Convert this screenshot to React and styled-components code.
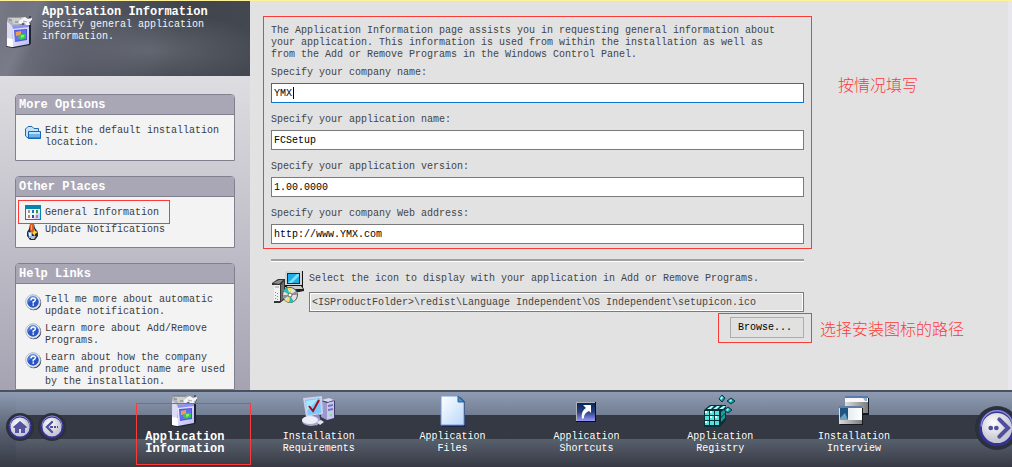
import React from "react";
import styled, { createGlobalStyle, css } from "styled-components";

const red = "#fb3a3a";

const GlobalStyle = createGlobalStyle`
  * { box-sizing: border-box; }
  html, body { margin: 0; padding: 0; }
  body, input, button {
    font-family: "Liberation Mono", "Noto Sans CJK SC", monospace;
    font-size: 10px;
    line-height: 12px;
  }
  svg { display: block; flex: none; }
`;

const Window = styled.div`
  height: 100vh;
  display: flex;
  flex-direction: column;
  overflow: hidden;
  border-top: 1px solid #fff09a;
  background: #e2e2e2;
`;

const Workspace = styled.div`
  flex: 1;
  min-height: 0;
  display: flex;
  border-right: 4px solid #e8e7ed;
`;

const Sidebar = styled.aside`
  width: 250px;
  flex: none;
  display: flex;
  flex-direction: column;
  overflow: hidden;
  background: #b4b3bf;
`;

const Banner = styled.header`
  flex: none;
  height: 75px;
  display: flex;
  gap: 6px;
  padding: 5px 6px 0 4px;
  color: #f4f4f6;
  background:
    linear-gradient(115deg, transparent 6%, rgba(150, 152, 165, 0.25) 14%, transparent 19%),
    radial-gradient(ellipse at 60% 65%, rgba(128, 131, 144, 0.5), transparent 55%),
    linear-gradient(100deg, #777a86 0%, #555863 35%, #40454c 70%, #444850 100%);

  svg { margin-top: 10px; }
`;

const PageTitle = styled.h1`
  margin: 0;
  font-size: 12px;
  line-height: 13px;
  color: #fff;
`;

const BannerText = styled.p`
  margin: 0;
`;

const Panels = styled.div`
  flex: 1;
  display: flex;
  flex-direction: column;
  gap: 15px;
  padding: 18px 15px 0;
  background: linear-gradient(#dedde1, #a5a3b2);
`;

const Panel = styled.section`
  border: 1px solid #80808f;
  border-radius: 4px 4px 0 0;
  background: #f3f3f3;
`;

const PanelTitle = styled.h2`
  margin: 0;
  height: 20px;
  padding: 0 3px;
  border-bottom: 1px solid #80808f;
  border-radius: 3px 3px 0 0;
  background: #a9a7b6;
  color: #fff;
  font-size: 12px;
  line-height: 20px;
`;

const LinkList = styled.ul`
  list-style: none;
  margin: 0;
  padding: ${(p) => p.$pad};
  display: flex;
  flex-direction: column;
  gap: ${(p) => p.$gap || 0}px;
`;

const PanelLink = styled.a`
  display: flex;
  align-items: ${(p) => (p.$framed ? "center" : "flex-start")};
  gap: 3px;
  margin-left: ${(p) => (p.$framed ? 6 : 9)}px;
  color: #3c3c3c;
  text-decoration: none;
`;

const Callout = styled.div`
  width: ${(p) => p.$width || "auto"};
  padding: ${(p) => p.$pad};
  margin: ${(p) => p.$margin || 0};
  border: 1px solid ${red};
`;

const Content = styled.main`
  flex: 1;
  min-width: 0;
  padding: 15px 8px 0 13px;
  color: #444;
`;

const Row = styled.div`
  display: grid;
  grid-template-columns: minmax(0, 549px) minmax(150px, 1fr);
  align-items: ${(p) => p.$align || "start"};
`;

const Note = styled.p`
  margin: 0;
  padding: ${(p) => p.$pad};
  color: ${red};
  font-family: "Noto Sans CJK SC", sans-serif;
  font-size: 16px;
  font-weight: 300;
  line-height: 20px;
  white-space: nowrap;
`;

const Intro = styled.p`
  margin: 0 0 6px;
  max-width: 516px;
`;

const Form = styled.form`
  display: flex;
  flex-direction: column;
  gap: 11px;
`;

const Field = styled.label`
  display: flex;
  flex-direction: column;
  gap: 4px;
`;

const TextInput = styled.input`
  width: 100%;
  height: 20px;
  margin: 0;
  padding: 0 2px;
  border: 1px solid #7a7a7a;
  border-radius: 0;
  outline: 0;
  color: #000;
  background: #fff;
  ${(p) => p.$active && css`
    border-color: #0f77d0;
    background: linear-gradient(#000, #000) 21px 3px / 1px 12px no-repeat #fff;
  `}
  ${(p) => p.$disabledLook && css`
    color: #444;
    background: #e2e2e2;
    box-shadow: inset 0 0 0 1px #fff;
  `}
`;

const Divider = styled.hr`
  height: 3px;
  margin: 10px 8px 9px;
  border: 0;
  border-top: 2px solid #a0a0a0;
  border-bottom: 1px solid #fff;
`;

const IconPicker = styled.div`
  display: flex;
  gap: 5px;
  padding: 0 8px 0 9px;

  label { flex: 1; gap: 7px; padding-top: 2px; }
`;

const BrowseButton = styled.button`
  display: block;
  width: 74px;
  height: 21px;
  padding: 0 4px 0 0;
  border: 1px solid #adadad;
  background: #e1e1e1;
  color: #000;
`;

const BrowseCell = styled.div`
  display: flex;
  justify-content: flex-end;
  padding-top: 1px;
`;

const Footer = styled.footer`
  flex: none;
  height: 77px;
  display: flex;
  overflow: hidden;
  border-top: 2px solid #4a525f;
  background:
    linear-gradient(#8e9bb2, #596272 50%, #363a44) 0 0 / 16px 100% no-repeat,
    linear-gradient(#8e9bb2 0, #737e92 23px, #343943 23px, #343943 47px, #58606d 47px, #373a44 75px);
`;

const HistoryButtons = styled.div`
  width: 118px;
  flex: none;
  display: flex;
  gap: 4px;
  padding: 21px 0 0 6px;
`;

const RoundButton = styled.button`
  display: block;
  width: ${(p) => p.$size}px;
  height: ${(p) => p.$size}px;
  flex: none;
  padding: 0;
  border: 0;
  background: none;
`;

const NextSlot = styled.div`
  width: 91px;
  flex: none;
  display: flex;
  padding: 14px 0 0 54px;
`;

const Steps = styled.nav`
  flex: 1;
  min-width: 0;
  display: flex;
`;

const Step = styled.a`
  position: relative;
  flex: 1;
  display: flex;
  flex-direction: column;
  align-items: center;
  gap: 4px;
  padding-top: 3px;
  color: #fff;
  text-align: center;
  text-decoration: none;

  ${(p) => p.$current && css`
    font-size: 12px;
    font-weight: bold;
    &::after {
      content: "";
      position: absolute;
      inset: 11px 1px 2px 18px;
      border: 1px solid ${red};
    }
  `}
`;

const ProductBox = () => (
  <svg width="32" height="32" viewBox="0 0 32 32">
    <defs>
      <linearGradient id="front" x2="1" y2="1">
        <stop stopColor="#f4f4ff" />
        <stop offset="1" stopColor="#b9bbf4" />
      </linearGradient>
    </defs>
    <path d="M25 9h2v18l-1 2-16 3-7-1-1-1 22-3Z" fill="#1f2230" />
    <path d="M3 5 8 9 9 31 3 30Z" fill="#dcdcf4" />
    <path d="M3 22 9 23v8l-6-1Z" fill="#fff" />
    <path d="m8 10 17-2v20L9 31Z" fill="url(#front)" />
    <path d="m4 1 17 0 4 6-17 3-5-5Z" fill="#b4b6b8" />
    <path d="M6 3h10M8 5h9M9 7h10" stroke="#e4e5e6" />
    <path d="M4 1h13M5 4h3M11 6h4" stroke="#77797c" />
    <path d="M8 10 25 8v3L9 13Z" fill="#8c93ee" />
    <path d="m10 14 13-1v11l-12 2Z" fill="#4e55dd" />
    <path d="m11 15 11-1v9l-11 2Z" fill="#656dec" />
    <path d="m12 16 5-1v4l-5 1Z" fill="#ee9e50" />
    <path d="m15 19 3-1 4 0v4l-5 2-3-2Z" fill="#34c851" />
    <path d="m17 19 3 0v2l-3 1Z" fill="#84f06a" />
    <path d="m17 3 4-2 3 2 4-1v3l-3 1 1 3-4 0-2-3-4 2-2-2Z" fill="#f5f5f8" />
    <path d="M25 1h2M27 5h1M18 8h2M26 8h1" stroke="#1b1c20" />
    <path d="m19 5 4 1" stroke="#a6a8ad" />
  </svg>
);

const FolderIcon = () => (
  <svg width="17" height="16" viewBox="0 0 17 16">
    <path d="M.5 4 3 1.5h4l2 2h4.5v3L13 13H3L.5 11Z" fill="#c4e3fa" stroke="#2268ae" />
    <path d="M3.5 6.5h12v7h-12Z" fill="#6bb3ea" stroke="#1765b4" />
    <path d="M4 7.5h11M4 8.5h11" stroke="#b9e2ff" />
    <path d="M4 12.5h11" stroke="#3b8ad0" />
  </svg>
);

const CalendarIcon = () => (
  <svg width="17" height="15" viewBox="0 0 17 15">
    <path d="M0 0h16v15H0Z" fill="#0784ad" />
    <path d="M1 4h14v10H1Z" fill="#f5f5fc" />
    <path d="M11 8h4v6H9Z" fill="#d5d1fa" />
    <path d="M3 5h2v3H3Z" fill="#9a9a9a" />
    <path d="M7 5h2v3H7Z" fill="#1a75b1" />
    <path d="M11 5h2v3h-2Z" fill="#23a03a" />
    <path d="M3 10h2v3H3Z" fill="#d17b51" />
    <path d="M7 10h2v3H7Z" fill="#2051a6" />
    <path d="M11 10h2v3h-2Z" fill="#bc8196" />
  </svg>
);

const UpdateIcon = () => (
  <svg width="17" height="16" viewBox="0 0 17 16">
    <path d="M5 0h4l1 4 3 4v4l-3 4H5l-3-4V8l2-3Z" fill="#202d46" />
    <path d="M5 0h4v4l1 3-3 2-2-2Z" fill="#d95a22" />
    <path d="M6 1h1v5H6Z" fill="#ffb17a" />
    <path d="M3 8h4v6H4Z" fill="#8eafe0" />
    <path d="M4 9h2v3H4Z" fill="#e9f2ff" />
    <path d="m9 5 1 2 3 1-3 2v2l-2-2-1-1 2-2Z" fill="#ffd240" />
    <path d="M6 12h5l-2 3H6Z" fill="#bdc4d1" />
  </svg>
);

const HelpIcon = () => (
  <svg width="17" height="17" viewBox="0 0 17 17">
    <circle cx="8.7" cy="8.7" r="7.5" fill="#222b49" />
    <circle cx="8" cy="8" r="7.3" fill="#f8f9fc" stroke="#b3bbc8" />
    <circle cx="8" cy="8" r="5.8" fill="#2857c5" />
    <path d="M3 7a5 5 0 0 1 10-1Q9 4 3 9Z" fill="#6c94e9" opacity=".6" />
    <path d="M6 6.2Q6 4 8.2 4T10.3 6Q10.3 7.2 8.2 8v1.5M7.5 11h1.5" fill="none" stroke="#fff" strokeWidth="1.5" />
  </svg>
);

const SetupIcon = () => (
  <svg width="32" height="33" viewBox="0 0 32 33">
    <path d="M0 12 6 8h7v20l-5 4H2V14H0Z" fill="#333" />
    <path d="m1 12 6-3h4l-4 4Z" fill="#8d8d8d" />
    <path d="M2 14h6v16H2Z" fill="#f2f2f2" />
    <path d="M3 16h4" stroke="#999" />
    <path d="M3 21h1v1H3zm2 1h1v1H5zm-2 2h1v1H3zm2 1h1v1H5zm-2 2h1v1H3zm2 1h1v1H5z" fill="#888" />
    <path d="m9 14 3-4v17l-3 3Z" fill="#6f6f6f" />
    <path d="M13 0h18v16H13Z" fill="#111" />
    <path d="M13 0h17v14H13Z" fill="#d4d4d4" />
    <path d="M15 2h13v11H15Z" fill="#08257e" />
    <path d="M16 3h11v9H16Z" fill="#1caee7" />
    <path d="m16 12 9-9h2v2l-7 7Z" fill="#7dddf5" />
    <path d="M14 15h16l2 3v2l-5 1H13Z" fill="#222" />
    <path d="M15 15h14l2 3H16Z" fill="#ccc" />
    <circle cx="18" cy="24" r="7.5" fill="#e1e1df" stroke="#555" />
    <path d="m18 24-7-4 4-4Zm0 0 4 7-5 1Z" fill="#29bbb4" />
    <path d="m18 24-2-7 4 0Zm0 0-5 6 4 1Z" fill="#f0e361" />
    <path d="m18 24 6-4 1 4Zm0 0-7 0 1 4Z" fill="#8f8f96" />
    <circle cx="18" cy="24" r="2" fill="#fff" stroke="#666" />
  </svg>
);

const ComputerIcon = () => (
  <svg width="34" height="32" viewBox="0 0 34 32">
    <path d="m19 5 9-1 5 2v17l-9 3-5-4Z" fill="#3c3c68" />
    <path d="m19 5 8-2 5 2-6 2Z" fill="#d8d7f0" />
    <path d="m19 6 6 2v17l-6-3Z" fill="#9c99cf" />
    <path d="m25 8 7-2v17l-7 2Z" fill="#c9c7ee" />
    <path d="m26 10 5-1v2l-5 1zm0 4 5-1v2l-5 1z" fill="#7775b5" />
    <path d="M28 19h2v2h-2z" fill="#75e96f" />
    <path d="M1 3 20 1l1 18-17 3Z" fill="#ceceeb" />
    <path d="m3 5 15-2 1 15-13 2Z" fill="#77caff" />
    <path d="m4 6 12-2-11 12Z" fill="#a6e8ff" />
    <path d="m7 11 4 5 6-11" fill="none" stroke="#a60c14" strokeWidth="2" />
    <path d="m11 21 6-2 2 8-5 4Z" fill="#8d8dcb" />
    <ellipse cx="9" cy="26" rx="9" ry="5" fill="#a9a9c6" />
    <ellipse cx="8" cy="25" rx="8" ry="4" fill="#ededf8" />
    <path d="m15 27 4-2 3 2-4 3Z" fill="#e2e2f5" />
  </svg>
);

const FileIcon = () => (
  <svg width="26" height="32" viewBox="0 0 26 32">
    <defs>
      <linearGradient id="paper" x1="0" y1="0" x2="1" y2="1">
        <stop stopColor="#fff" />
        <stop offset="1" stopColor="#b9d7fb" />
      </linearGradient>
    </defs>
    <path d="M2 2h18l5 5v25H2Z" fill="#17264a" />
    <path d="M1 1h17l6 6v23H1Z" fill="url(#paper)" stroke="#7898d2" />
    <path d="M18 1v6h6Z" fill="#2e98dc" stroke="#365c91" />
  </svg>
);

const ShortcutIcon = () => (
  <svg width="32" height="32" viewBox="0 0 32 32">
    <defs>
      <linearGradient id="tile" x2="0" y2="1">
        <stop stopColor="#00295b" />
        <stop offset=".5" stopColor="#294080" />
        <stop offset="1" stopColor="#9898ff" />
      </linearGradient>
    </defs>
    <path d="M6 7h20v20H6Z" fill="#080d1a" />
    <path d="M6 7h19v19H6Z" fill="#b3b3b7" />
    <path d="M7 8h18v18H7Z" fill="url(#tile)" />
    <path d="M13 10h8v8l-2-2c-4 2-5 4-5 7l-2 1c-1-6 1-9 4-11Z" fill="#fff" />
  </svg>
);

const RegistryIcon = () => (
  <svg width="32" height="32" viewBox="0 0 32 32">
    <path d="m0 15 6-5h16v15l-6 7H0Z" fill="#062f36" />
    <path d="M1 16h4v4H1zm5 0h4v4H6zm5 0h4v4h-4zM1 21h4v4H1zm5 0h4v4H6zm5 0h4v4h-4zM1 26h4v4H1zm5 0h4v4H6zm5 0h4v4h-4z" fill="#54e1df" />
    <path d="m3 14 4-3h3l-3 3zm6 0 4-3h3l-3 3zm6 0 4-3h3l-3 3z" fill="#a8ffff" />
    <path d="m17 17 4-3v4l-4 4zm0 6 4-4v4l-4 4z" fill="#139fa3" />
    <path d="M1 16h2v2H1zm5 0h2v2H6zm5 5h2v2h-2zM1 26h2v2H1zm5-5h2v2H6z" fill="#dfffff" />
    <path d="m18 0 3 3-3 4-3-3Zm9 3 4 3-4 3-4-3Zm-3 9 4 3-4 3-4-3Z" fill="#0b9da2" stroke="#083a45" />
    <path d="m18 1 1 2-2 2-1-2Zm9 3 1 2-2 1-1-1Zm-3 9 1 2-2 1-1-1Z" fill="#a2ffff" />
  </svg>
);

const DialogsIcon = () => (
  <svg width="30" height="32" viewBox="0 0 30 32">
    <defs>
      <linearGradient id="sheet">
        <stop stopColor="#d5e1e8" />
        <stop offset="1" stopColor="#fff" />
      </linearGradient>
      <linearGradient id="shade">
        <stop stopColor="#dcdcdc" />
        <stop offset="1" stopColor="#7c7c7c" />
      </linearGradient>
    </defs>
    <path d="M7 3h23v17H7Z" fill="#111820" />
    <path d="M6 2h23v16H6Z" fill="url(#shade)" />
    <path d="M6 2h23v5H6Z" fill="#f7f7f7" />
    <path d="M6 2h23" stroke="#5c7ba9" strokeWidth="2" />
    <path d="M24 3h4v3h-2Z" fill="#88b3cf" />
    <path d="M1 13h23v17H1Z" fill="#15191f" />
    <path d="M0 12h23v16H0Z" fill="url(#sheet)" />
    <path d="M1 13h8v12H1Z" fill="#1f5580" />
    <path d="m1 23 5-5 3 7H1Z" fill="#6da1bd" />
    <path d="M0 25h23v4H0Z" fill="url(#shade)" />
    <path d="M0 12h23" stroke="#5f7ea6" strokeWidth="2" />
  </svg>
);

const Disc = ({ size, children }) => (
  <svg width={size} height={size} viewBox="0 0 28 28">
    <defs>
      <radialGradient id="disc" cx=".4" cy=".35">
        <stop stopColor="#fff" />
        <stop offset="1" stopColor="#c9c9d5" />
      </radialGradient>
    </defs>
    <circle cx="14" cy="14" r="14" fill="#2c303a" />
    <circle cx="14" cy="14" r="10.6" fill="url(#disc)" stroke="#343391" strokeWidth="2" />
    <path d="M4 13a10 10 0 0 1 20 0" fill="none" stroke="#8b8bd0" />
    {children}
  </svg>
);

const steps = [
  ["Application", "Information", ProductBox],
  ["Installation", "Requirements", ComputerIcon],
  ["Application", "Files", FileIcon],
  ["Application", "Shortcuts", ShortcutIcon],
  ["Application", "Registry", RegistryIcon],
  ["Installation", "Interview", DialogsIcon],
];

const helpTopics = [
  ["Tell me more about automatic", "update notification."],
  ["Learn more about Add/Remove", "Programs."],
  ["Learn about how the company", "name and product name are used", "by the installation."],
];

const Lines = ({ lines }) => (
  <span>
    {lines.map((line, i) => (
      <React.Fragment key={line}>
        {i > 0 && <br />}
        {line}
      </React.Fragment>
    ))}
  </span>
);

export default function App() {
  return (
    <Window>
      <GlobalStyle />
      <Workspace>
        <Sidebar>
          <Banner>
            <ProductBox />
            <div>
              <PageTitle>Application Information</PageTitle>
              <BannerText>
                <Lines lines={["Specify general application", "information."]} />
              </BannerText>
            </div>
          </Banner>
          <Panels>
            <Panel>
              <PanelTitle>More Options</PanelTitle>
              <LinkList $pad="10px 0 11px">
                <li>
                  <PanelLink href="#location">
                    <FolderIcon />
                    <Lines lines={["Edit the default installation", "location."]} />
                  </PanelLink>
                </li>
              </LinkList>
            </Panel>
            <Panel>
              <PanelTitle>Other Places</PanelTitle>
              <LinkList $pad="3px 0 7px">
                <li>
                  <Callout $width="152px" $pad="4px 0 3px" $margin="0 0 0 2px">
                    <PanelLink href="#general" $framed>
                      <CalendarIcon />
                      General Information
                    </PanelLink>
                  </Callout>
                </li>
                <li>
                  <PanelLink href="#updates">
                    <UpdateIcon />
                    Update Notifications
                  </PanelLink>
                </li>
              </LinkList>
            </Panel>
            <Panel>
              <PanelTitle>Help Links</PanelTitle>
              <LinkList $pad="10px 0 1px" $gap={5}>
                {helpTopics.map((lines) => (
                  <li key={lines[0]}>
                    <PanelLink href="#help">
                      <HelpIcon />
                      <Lines lines={lines} />
                    </PanelLink>
                  </li>
                ))}
              </LinkList>
            </Panel>
          </Panels>
        </Sidebar>

        <Content>
          <Row>
            <Callout $pad="8px 7px 4px">
              <Intro>
                The Application Information page assists you in requesting general information about
                your application. This information is used from within the installation as well as
                from the Add or Remove Programs in the Windows Control Panel.
              </Intro>
              <Form>
                <Field>
                  Specify your company name:
                  <TextInput $active defaultValue="YMX" />
                </Field>
                <Field>
                  Specify your application name:
                  <TextInput defaultValue="FCSetup" />
                </Field>
                <Field>
                  Specify your application version:
                  <TextInput defaultValue="1.00.0000" />
                </Field>
                <Field>
                  Specify your company Web address:
                  <TextInput defaultValue="http://www.YMX.com" />
                </Field>
              </Form>
            </Callout>
            <Note $pad="58px 0 0 26px">按情况填写</Note>
          </Row>
          <Row>
            <div>
              <Divider />
              <IconPicker>
                <SetupIcon />
                <Field>
                  Select the icon to display with your application in Add or Remove Programs.
                  <TextInput
                    $disabledLook
                    readOnly
                    value="<ISProductFolder>\redist\Language Independent\OS Independent\setupicon.ico"
                  />
                </Field>
              </IconPicker>
            </div>
          </Row>
          <Row $align="center">
            <BrowseCell>
              <Callout $pad="3px 7px 4px 11px">
                <BrowseButton type="button">Browse...</BrowseButton>
              </Callout>
            </BrowseCell>
            <Note $pad="0 0 0 8px">选择安装图标的路径</Note>
          </Row>
        </Content>
      </Workspace>

      <Footer>
        <HistoryButtons>
          <RoundButton type="button" aria-label="Home" $size={28}>
            <Disc size={28}>
              <path d="m7 14 7-6 7 6-1 1h-1v5h-4v-4h-2v4H9v-5H8Z" fill="#54539b" />
            </Disc>
          </RoundButton>
          <RoundButton type="button" aria-label="Back" $size={28}>
            <Disc size={28}>
              <path d="m14 9-5 5 5 5" fill="none" stroke="#514f9c" strokeWidth="2.4" strokeLinecap="round" />
              <path d="M12 14h3M16 14h2M19 14h1" stroke="#514f9c" strokeWidth="2.2" />
            </Disc>
          </RoundButton>
        </HistoryButtons>
        <Steps>
          {steps.map(([first, second, Icon], i) => (
            <Step key={second} href="#step" $current={i === 0}>
              <Icon />
              <Lines lines={[first, second]} />
            </Step>
          ))}
        </Steps>
        <NextSlot>
          <RoundButton type="button" aria-label="Next" $size={44}>
            <Disc size={44}>
              <path d="m15.5 8.5 5.5 5.5-5.5 5.5" fill="none" stroke="#514f9c" strokeWidth="2.6" strokeLinecap="round" />
              <circle cx="10" cy="14" r="1.5" fill="#514f9c" />
              <circle cx="13.6" cy="14" r="1.5" fill="#514f9c" />
            </Disc>
          </RoundButton>
        </NextSlot>
      </Footer>
    </Window>
  );
}
